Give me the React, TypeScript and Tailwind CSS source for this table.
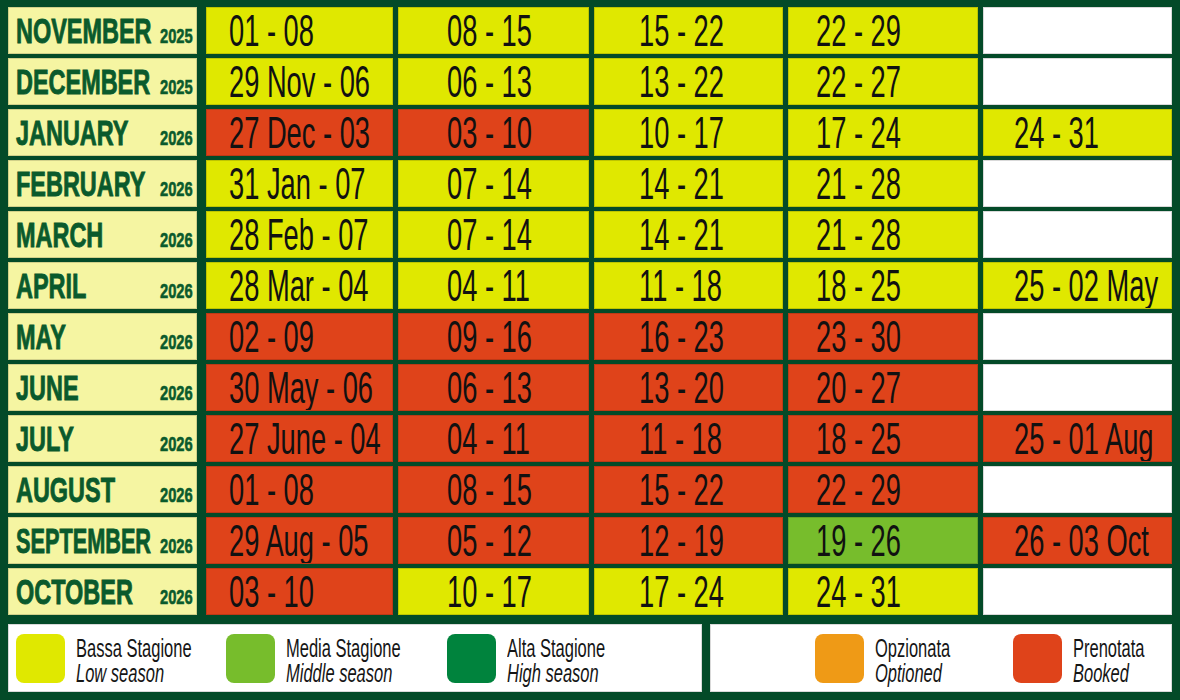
import React from "react";

type Tone = "y" | "r" | "g" | "w";

type Cell = { text: string; tone: Tone };

const toneClass: Record<Tone, string> = {
  y: "bg-[#e0e800]",
  r: "bg-[#df431a]",
  g: "bg-[#77bd2c]",
  w: "bg-white",
};

// left padding per column, the dates sit at the same x in each column
const colPad = ["pl-[22px]", "pl-[48px]", "pl-[44px]", "pl-[27px]", "pl-[30px]"];

const c = (text: string, tone: Tone): Cell => ({ text, tone });
const empty = c("", "w");

const rows: { month: string; year: string; cells: Cell[] }[] = [
  { month: "NOVEMBER", year: "2025", cells: [c("01 - 08", "y"), c("08 - 15", "y"), c("15 - 22", "y"), c("22 - 29", "y"), empty] },
  { month: "DECEMBER", year: "2025", cells: [c("29 Nov - 06", "y"), c("06 - 13", "y"), c("13 - 22", "y"), c("22 - 27", "y"), empty] },
  { month: "JANUARY", year: "2026", cells: [c("27 Dec - 03", "r"), c("03 - 10", "r"), c("10 - 17", "y"), c("17 - 24", "y"), c("24 - 31", "y")] },
  { month: "FEBRUARY", year: "2026", cells: [c("31 Jan - 07", "y"), c("07 - 14", "y"), c("14 - 21", "y"), c("21 - 28", "y"), empty] },
  { month: "MARCH", year: "2026", cells: [c("28 Feb - 07", "y"), c("07 - 14", "y"), c("14 - 21", "y"), c("21 - 28", "y"), empty] },
  { month: "APRIL", year: "2026", cells: [c("28 Mar - 04", "y"), c("04 - 11", "y"), c("11 - 18", "y"), c("18 - 25", "y"), c("25 - 02 May", "y")] },
  { month: "MAY", year: "2026", cells: [c("02 - 09", "r"), c("09 - 16", "r"), c("16 - 23", "r"), c("23 - 30", "r"), empty] },
  { month: "JUNE", year: "2026", cells: [c("30 May - 06", "r"), c("06 - 13", "r"), c("13 - 20", "r"), c("20 - 27", "r"), empty] },
  { month: "JULY", year: "2026", cells: [c("27 June - 04", "r"), c("04 - 11", "r"), c("11 - 18", "r"), c("18 - 25", "r"), c("25 - 01 Aug", "r")] },
  { month: "AUGUST", year: "2026", cells: [c("01 - 08", "r"), c("08 - 15", "r"), c("15 - 22", "r"), c("22 - 29", "r"), empty] },
  { month: "SEPTEMBER", year: "2026", cells: [c("29 Aug - 05", "r"), c("05 - 12", "r"), c("12 - 19", "r"), c("19 - 26", "g"), c("26 - 03 Oct", "r")] },
  { month: "OCTOBER", year: "2026", cells: [c("03 - 10", "r"), c("10 - 17", "y"), c("17 - 24", "y"), c("24 - 31", "y"), empty] },
];

function LegendItem({ color, it, en, width }: { color: string; it: string; en: string; width?: string }) {
  return (
    <div className={`flex items-center ${width ?? ""}`}>
      <div className={`w-[49px] h-[49px] rounded-[8px] shrink-0 ${color}`} />
      <div className="ml-[11px] pt-[6px] text-[25px] leading-[25px] text-[#151515] w-0 flex-1">
        <div className="inline-block origin-left scale-x-[0.66] whitespace-nowrap">{it}</div>
        <div className="block">
          <span className="inline-block origin-left scale-x-[0.66] whitespace-nowrap italic">{en}</span>
        </div>
      </div>
    </div>
  );
}

export default function App() {
  return (
    <div
      className="w-[1180px] h-[700px] bg-[#034a28] px-[8px] pt-[7px] overflow-hidden"
      style={{ fontFamily: '"Liberation Sans", Arial, sans-serif' }}
    >
      <div className="flex flex-col gap-[4px]">
        {rows.map((row) => (
          <div key={row.month} className="flex h-[47px]">
            {/* month label */}
            <div className="w-[189px] shrink-0 mr-[9px] bg-[#f5f5a2] border border-black/15 flex items-baseline pl-[7px] pr-[3px] leading-[45px] text-[#0a5a2c] font-bold overflow-hidden [-webkit-text-stroke:0.9px_#0a5a2c]">
              <div className="w-0 flex-1 min-w-0">
                <span
                  className={`inline-block origin-left whitespace-nowrap text-[35px] ${
                    row.month === "SEPTEMBER" ? "scale-x-[0.62]" : "scale-x-[0.67]"
                  }`}
                >
                  {row.month}
                </span>
              </div>
              <span className="inline-block origin-right scale-x-[0.7] whitespace-nowrap text-[21px] [-webkit-text-stroke:0.6px_#0a5a2c]">
                {row.year}
              </span>
            </div>

            {/* weeks */}
            <div className="flex-1 min-w-0 grid grid-cols-[187px_191px_189px_190px_minmax(0,1fr)] gap-[5px]">
              {row.cells.map((cell, i) => (
                <div
                  key={i}
                  className={`${toneClass[cell.tone]} ${colPad[i]} min-w-0 overflow-hidden border border-black/15 text-[44px] leading-[45px] text-[#111]`}
                >
                  <span className="inline-block origin-left scale-x-[0.62] whitespace-nowrap">
                    {cell.text}
                  </span>
                </div>
              ))}
            </div>
          </div>
        ))}
      </div>

      {/* legend */}
      <div className="flex gap-[8px] mt-[9px] h-[68px]">
        <div className="w-[694px] bg-white border border-black/15 flex pl-[7px]">
          <LegendItem color="bg-[#e0e800]" it="Bassa Stagione" en="Low season" width="w-[210px]" />
          <LegendItem color="bg-[#77bd2c]" it="Media Stagione" en="Middle season" width="w-[221px]" />
          <LegendItem color="bg-[#00833d]" it="Alta Stagione" en="High season" width="flex-1" />
        </div>
        <div className="flex-1 bg-white border border-black/15 flex pl-[104px]">
          <LegendItem color="bg-[#ef9a16]" it="Opzionata" en="Optioned" width="w-[198px]" />
          <LegendItem color="bg-[#df431a]" it="Prenotata" en="Booked" width="flex-1" />
        </div>
      </div>
    </div>
  );
}
